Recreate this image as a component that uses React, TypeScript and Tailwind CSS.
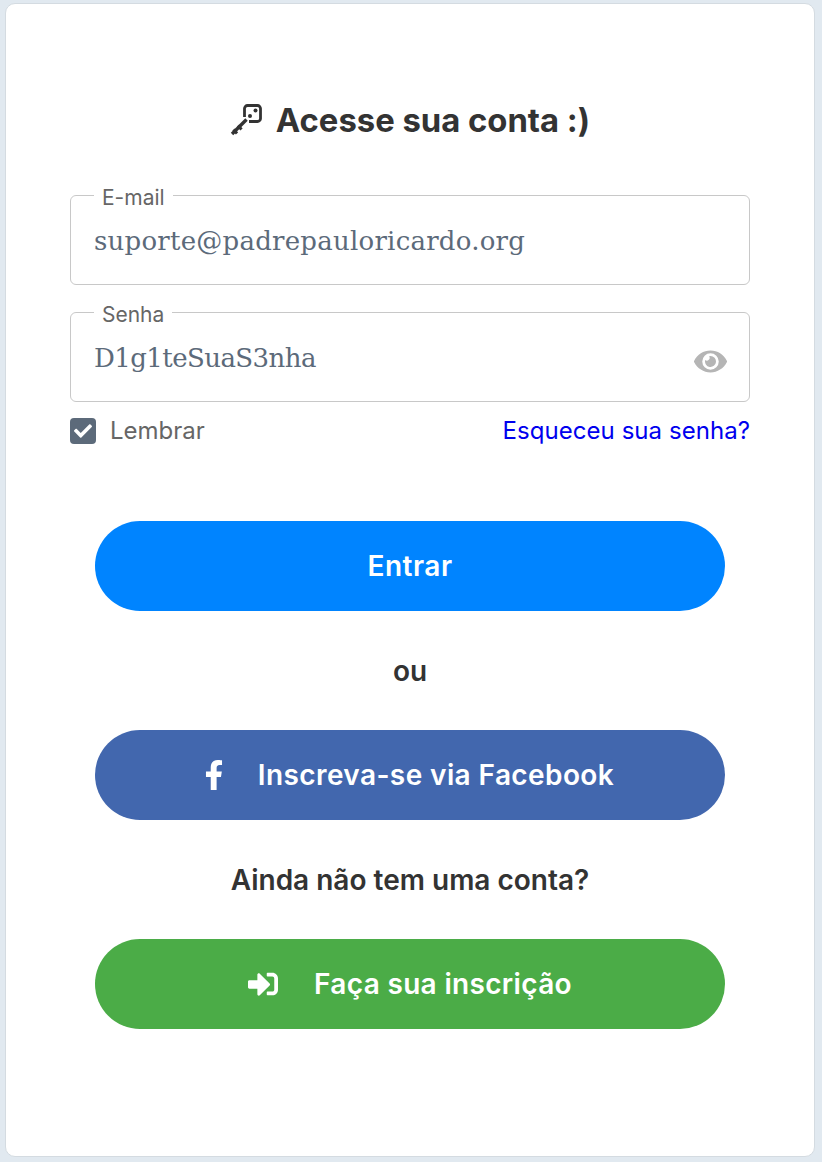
import { FaEye, FaFacebookF, FaSignInAlt, FaCheck } from 'react-icons/fa'

function KeyIcon() {
  return (
    <svg viewBox="0 0 32 32" className="w-[32px] h-[32px] text-[#333]" fill="none" stroke="currentColor">
      <path d="M14.5 13V4.5a3 3 0 0 1 3-3h10a3 3 0 0 1 3 3v10a3 3 0 0 1-3 3H19" strokeWidth="2.8" />
      <path d="M16.5 15.5L2 30" strokeWidth="3.4" />
      <path d="M3.5 25.5l3.5 4M8 21.5l3.5 4" strokeWidth="3" />
      <circle cx="20" cy="12" r="2" fill="currentColor" stroke="none" />
      <circle cx="25.5" cy="6.5" r="2" fill="currentColor" stroke="none" />
    </svg>
  )
}

function Field({ label, value, tracking, eye }: { label: string; value: string; tracking: string; eye?: boolean }) {
  return (
    <fieldset className="h-[105px] border border-[#c8c8c8] rounded-[6px] pl-[23px] pr-[22px] flex-none">
      <legend className="px-[8px] pt-[6px] text-[21px] leading-[24px] text-[#666]">{label}</legend>
      <div className="flex items-center justify-between h-[62px]">
        <span className={`font-['DejaVu_Serif'] text-[26px] text-[#5c6a7a] ${tracking}`}>{value}</span>
        {eye && <FaEye className="w-[33px] h-[33px] text-[#b5b5b5] mt-[6px]" />}
      </div>
    </fieldset>
  )
}

export default function App() {
  return (
    <div className="w-[822px] h-[1162px] bg-[#e1e9f0] pt-[3px] pl-[5px] pr-[7px] pb-[5px] font-['Inter',sans-serif]">
      <div className="h-full bg-white rounded-[10px] border border-[#d4dbe1] px-[64px] pt-[96px]">
        <h1 className="flex items-center justify-center gap-[14px] text-[32.8px] leading-[40px] font-bold text-[#333]">
          <KeyIcon />
          Acesse sua conta :)
        </h1>
        <div className="mt-[40px] flex flex-col gap-[12px]">
          <Field label="E-mail" value="suporte@padrepauloricardo.org" tracking="tracking-[0.24px]" />
          <Field label="Senha" value="D1g1teSuaS3nha" tracking="tracking-[-0.57px]" eye />
        </div>
        <div className="flex items-center justify-between mt-[15px]">
          <label className="flex items-center gap-[14px] text-[24px] leading-[28px] text-[#666]">
            <span className="w-[26px] h-[26px] rounded-[4px] bg-[#5c6a7a] flex items-center justify-center">
              <FaCheck className="w-[18px] h-[18px] text-white" />
            </span>
            Lembrar
          </label>
          <a className="text-[24px] leading-[28px] text-[#0000ee] tracking-[0.05px]">Esqueceu sua senha?</a>
        </div>
        <div className="px-[25px] mt-[76px] flex flex-col items-stretch">
          <button className="h-[90px] rounded-full bg-[#0084ff] text-white text-[28px] font-semibold tracking-[0.5px]">Entrar</button>
          <p className="h-[119px] flex items-center justify-center text-[28px] font-semibold text-[#333]">ou</p>
          <button className="h-[90px] rounded-full bg-[#4267ae] text-white text-[28px] font-semibold tracking-[0.4px] flex items-center justify-center gap-[29px] pr-[7px]">
            <FaFacebookF className="w-[30px] h-[30px]" />
            Inscreva-se via Facebook
          </button>
          <p className="h-[119px] flex items-center justify-center text-[28px] font-semibold text-[#333]">Ainda não tem uma conta?</p>
          <button className="h-[90px] rounded-full bg-[#4bac47] text-white text-[28px] font-semibold tracking-[0.33px] flex items-center justify-center gap-[36px]">
            <FaSignInAlt className="w-[30px] h-[30px]" />
            Faça sua inscrição
          </button>
        </div>
      </div>
    </div>
  )
}
